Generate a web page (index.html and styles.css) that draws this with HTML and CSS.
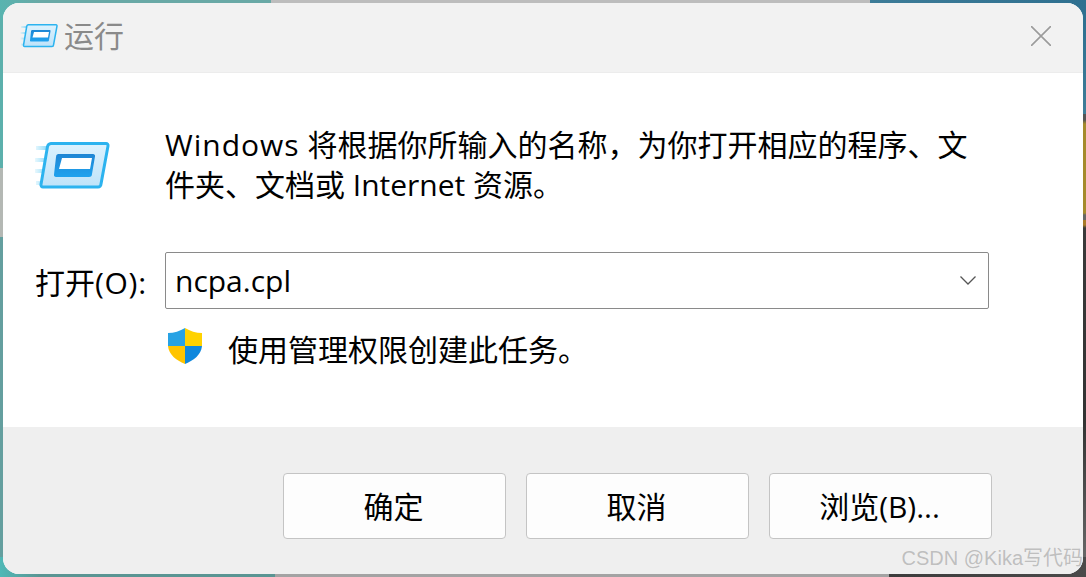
FILE: index.html
```html
<!DOCTYPE html>
<html lang="zh-CN">
<head>
<meta charset="utf-8">
<title>运行</title>
<link rel="stylesheet" href="styles.css">
</head>
<body>
<div class="desktop">
  <div class="strip strip-top"></div>
  <div class="strip strip-bottom"></div>
  <div class="strip strip-left"></div>
  <div class="strip strip-right"></div>
  <main class="dialog">
    <header class="titlebar">
      <svg class="title-icon" viewBox="0 0 76 50">
        <defs>
          <linearGradient id="tf" x1="0" y1="0" x2="0" y2="1"><stop offset="0" stop-color="#dcf2fe"/><stop offset="1" stop-color="#bfe3f9"/></linearGradient>
          <linearGradient id="ti" x1="0" y1="0" x2="0" y2="1"><stop offset="0" stop-color="#1f86d4"/><stop offset="1" stop-color="#1fa2ee"/></linearGradient>
          <linearGradient id="ts" gradientUnits="userSpaceOnUse" x1="0" y1="0" x2="15" y2="0"><stop offset="0" stop-color="#8fdcf9" stop-opacity="0.150"/><stop offset="1" stop-color="#7fd4f7"/></linearGradient>
        </defs>
        <path d="M2 6h12v4H2zM1 18h11v4H1zM1 29h11v4H1zM2 41h7v4H2z" fill="url(#ts)"/>
        <path d="M17 3.500H72a2 2 0 0 1 2 2.500L67 44a3 3 0 0 1-3 3H9a2 2 0 0 1-2-2.500L13.500 6.500a4 4 0 0 1 3.500-3z" fill="url(#tf)" stroke="#2cb3ef" stroke-width="3"/>
        <path d="M24 14H59a2 2 0 0 1 2 2.500L58 34a3 3 0 0 1-3 3H22a2 2 0 0 1-2-2.500L22 17a3 3 0 0 1 2-3z" fill="url(#ti)"/>
        <path d="M28 18H58L56 29H25z" fill="#fff"/>
      </svg>
      <span class="title-text">运行</span>
      <svg class="close-icon" viewBox="0 0 20 20"><path d="M0 0L20 20M20 0L0 20" stroke="#9b9b9b" stroke-width="1.600"/></svg>
    </header>
    <section class="content">
      <div class="intro">
        <svg class="run-icon" viewBox="0 0 76 50">
          <path d="M2 6h12v4H2zM1 18h11v4H1zM1 29h11v4H1zM2 41h7v4H2z" fill="url(#ts)"/>
          <path d="M17 3.500H72a2 2 0 0 1 2 2.500L67 44a3 3 0 0 1-3 3H9a2 2 0 0 1-2-2.500L13.500 6.500a4 4 0 0 1 3.500-3z" fill="url(#tf)" stroke="#2cb3ef" stroke-width="3"/>
          <path d="M24 14H59a2 2 0 0 1 2 2.500L58 34a3 3 0 0 1-3 3H22a2 2 0 0 1-2-2.500L22 17a3 3 0 0 1 2-3z" fill="url(#ti)"/>
          <path d="M28 18H58L56 29H25z" fill="#fff"/>
        </svg>
        <p class="intro-text"><span class="latin-wide">Windows</span> 将根据你所输入的名称，为你打开相应的程序、文件夹、文档或 Internet 资源。</p>
      </div>
      <div class="open-row">
        <label class="open-label">打开<span class="latin">(O):</span></label>
        <div class="combo">
          <span class="combo-value">ncpa.cpl</span>
          <svg class="chevron" viewBox="0 0 16 9"><path d="M0.500 0.500L8 8L15.500 0.500" fill="none" stroke="#555" stroke-width="1.300"/></svg>
        </div>
      </div>
      <div class="admin-row">
        <svg class="shield" viewBox="0 0 36 38">
          <path d="M18 1C13 4 7 6 1 6V19H18z" fill="#27a2e4"/>
          <path d="M18 1C23 4 29 6 35 6V19H18z" fill="#ffd200"/>
          <path d="M1 19C2 28 9 33 18 37V19z" fill="#ffc400"/>
          <path d="M35 19C34 28 27 33 18 37V19z" fill="#0f88dd"/>
        </svg>
        <span class="admin-text">使用管理权限创建此任务。</span>
      </div>
    </section>
    <footer class="actions">
      <button class="btn">确定</button>
      <button class="btn">取消</button>
      <button class="btn">浏览(B)...</button>
      <span class="watermark">CSDN @Kika写代码</span>
    </footer>
  </main>
</div>
</body>
</html>
```
FILE: styles.css
```css
* { box-sizing: border-box; }
html, body { margin: 0; padding: 0; }
body {
  width: 1086px;
  height: 577px;
  overflow: hidden;
  font-family: "Open Sans", "Noto Sans", "Noto Sans CJK SC", sans-serif;
}
.desktop {
  position: relative;
  width: 1086px;
  height: 577px;
  padding: 3px;
  background: #5f9f9e;
}
.strip { position: absolute; }
.strip-top {
  left: 0; right: 0; top: 0; height: 20px;
  background: linear-gradient(90deg, #58b4b0 0, #69a9a6 40px, #69a9a6 271px, #bdbdbd 271px, #bdbdbd 870px, #3d7c98 870px, #2f7090 1086px);
}
.strip-bottom {
  left: 0; right: 0; bottom: 0; height: 20px;
  background: linear-gradient(90deg, #4fb8b6 0, #5a9593 40px, #5a9593 275px, #a3a3a3 275px, #a3a3a3 889px, #3c3c3c 889px, #4a4a4a 1086px);
}
.strip-left {
  left: 0; top: 20px; bottom: 20px; width: 3px;
  background: linear-gradient(180deg, #5cb0ac 0, #5cb0ac 148px, #b4b8b4 148px, #b4b8b4 217px, #649f9f 217px, #649f9f 100%);
}
.strip-right {
  right: 0; top: 20px; bottom: 20px; width: 3px;
  background: linear-gradient(180deg, #2f7090 0, #3f7d98 94px, #555 94px, #555 100px, #a58a2c 104px, #a58a2c 193px, #666 195px, #666 200px, #a87a28 200px, #a87a28 205px, #3a3a3a 208px, #333 400px, #666 100%);
}
.dialog {
  position: relative;
  width: 1080px;
  height: 571px;
  display: flex;
  flex-direction: column;
  background: #fff;
  border-radius: 16px;
  overflow: hidden;
}
.titlebar {
  flex: none;
  height: 70px;
  display: flex;
  align-items: center;
  padding: 0 32px 0 17px;
  background: #f2f2f2;
  border-bottom: 1px solid #ececec;
}
.title-icon { width: 38px; height: 25px; margin-top: -4px; }
.title-text {
  margin-left: 6px;
  margin-top: -4px;
  font-size: 30px;
  line-height: 40px;
  color: #8a8a8a;
}
.close-icon { width: 20px; height: 20px; margin-left: auto; margin-top: -4px; }
.content {
  flex: 1;
  display: flex;
  flex-direction: column;
}
.intro { display: flex; padding: 52px 90px 0 31px; }
.run-icon { flex: none; width: 76px; height: 50px; margin-top: 15px; }
.intro-text {
  margin: 0 0 0 55px;
  width: 810px;
  font-size: 30px;
  line-height: 40px;
  color: #000;
}
.latin { letter-spacing: 0.7px; }
.latin-wide { letter-spacing: 1px; }
.open-row { display: flex; align-items: center; margin-top: 47px; padding-left: 32px; }
.open-label { width: 130px; font-size: 30px; color: #000; }
.combo {
  width: 824px;
  height: 57px;
  display: flex;
  align-items: center;
  justify-content: space-between;
  padding: 0 12px 0 9px;
  border: 1px solid #8a8a8a;
  border-radius: 2px;
}
.combo-value { font-size: 30px; color: #000; }
.chevron { width: 16px; height: 9px; }
.admin-row { display: flex; align-items: flex-start; margin-top: 18px; padding-left: 164px; }
.shield { width: 36px; height: 38px; }
.admin-text { margin-left: 25px; font-size: 30px; line-height: 41px; color: #000; margin-top: 2px; }
.actions {
  position: relative;
  flex: none;
  height: 147px;
  display: flex;
  gap: 20px;
  padding: 46px 0 0 280px;
  background: #efefef;
}
.btn {
  width: 223px;
  height: 66px;
  padding: 0 2px 2px 0;
  border: 1px solid #c4c4c4;
  border-radius: 4px;
  background: #fdfdfd;
  font-family: inherit;
  font-size: 30px;
  color: #000;
}
.watermark {
  position: absolute;
  right: 0;
  bottom: 4px;
  font-family: "Liberation Sans", "Noto Sans CJK SC", sans-serif;
  font-size: 20px;
  line-height: 24px;
  color: rgba(130, 130, 130, 0.45);
}
```
